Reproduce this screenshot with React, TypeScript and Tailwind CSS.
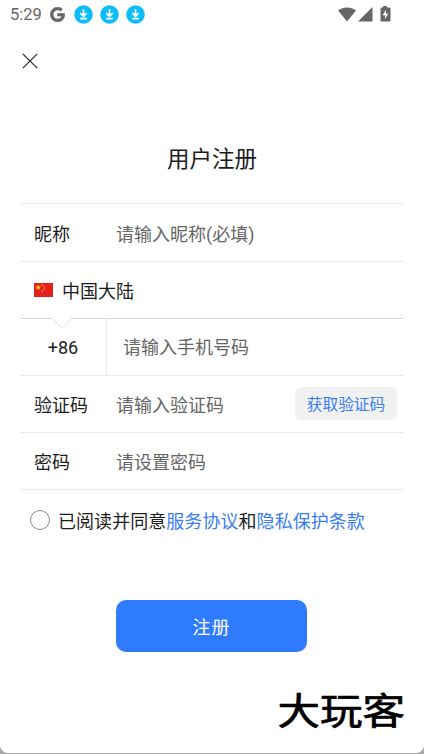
import { useState } from "react"
import type { ReactNode } from "react"
import { FaGoogle } from "react-icons/fa"

function DownloadBadge() {
  return (
    <svg width="19" height="19" viewBox="0 0 19 19" fill="none" aria-hidden>
      <circle cx="9.5" cy="9.5" r="9.3" fill="#0cbcfb" />
      <path d="M9.5 4v7.2M6.3 8.2l3.2 3.2 3.2-3.2M6.2 13.6h6.6" stroke="#fff" strokeWidth="1.7" />
    </svg>
  )
}

function StatusBar() {
  return (
    <div className="flex h-7 shrink-0 items-center pt-px pl-[10px] text-[#666]">
      <span className="w-[33px] pt-[2px] text-[16.5px] leading-none whitespace-nowrap">5:29</span>
      <FaGoogle className="ml-[7px] size-[15px]" stroke="currentColor" strokeWidth="22" />
      <div className="ml-[9px] flex gap-[7px]">
        <DownloadBadge />
        <DownloadBadge />
        <DownloadBadge />
      </div>
      <svg className="mr-[32px] mb-px ml-auto" width="54" height="17" viewBox="0 0 54 17" fill="#666" aria-hidden>
        <path d="M0 4.6C5.5.4 12.5.4 18 4.6L9 15.5Z" />
        <path d="M34.5 1V15.5H20Z" />
        <path d="M45 0h4v1.5h2.5a1 1 0 0 1 1 1V14.5a1 1 0 0 1-1 1h-8a1 1 0 0 1-1-1v-12a1 1 0 0 1 1-1H45Z" />
        <path d="M48 4l-3.5 5.2h2.4V13l3.5-5.2H48Z" fill="#fff" />
      </svg>
    </div>
  )
}

function ChinaFlag() {
  return (
    <svg className="mr-[9px] mb-[2px]" width="19" height="14" viewBox="0 0 19 14" aria-hidden>
      <rect width="19" height="14" fill="#e3201b" />
      <path d="M4.2 1.5l.8 2.1h2.2L5.5 4.9l.6 2.2-1.9-1.3-1.9 1.3.6-2.2-1.7-1.3h2.2Z" fill="#fbc91d" />
      <g fill="#f5a623">
        <circle cx="8.2" cy="1.9" r=".8" />
        <circle cx="10.2" cy="3.7" r=".8" />
        <circle cx="10.2" cy="6.2" r=".8" />
        <circle cx="8.2" cy="8.2" r=".8" />
      </g>
    </svg>
  )
}

type FieldProps = {
  label: string
  placeholder: string
  type?: string
  children?: ReactNode
}

function Field({ label, placeholder, type = "text", children }: FieldProps) {
  return (
    <div className="flex h-[57px] items-center border-b border-[#ebebeb] pt-[2px] pl-[14px] pr-[7px]">
      <label className="w-[82px] shrink-0">{label}</label>
      <input
        type={type}
        placeholder={placeholder}
        className="h-10 w-0 min-w-0 flex-1 bg-transparent outline-none placeholder:text-[#666]"
      />
      {children}
    </div>
  )
}

export default function App() {
  const [agreed, setAgreed] = useState(false)

  return (
    <div className="h-[754px] w-[424px] overflow-hidden bg-[#aaa] font-[Roboto,'Noto_Sans_CJK_SC',sans-serif] text-[18px] text-[#1c1c1c]">
      <div className="flex h-[753px] flex-col rounded-b-[8px] bg-white">
        <StatusBar />

        <button type="button" aria-label="Close" className="mt-[25px] ml-[22px] size-4">
          <svg width="16" height="16" viewBox="0 0 16 16" stroke="#222" strokeWidth="1.2">
            <path d="M.8.8l14.4 14.4M15.2.8.8 15.2" />
          </svg>
        </button>

        <h1 className="mt-[73px] text-center text-[22.5px] leading-[34px]">用户注册</h1>

        <div className="mt-[27px] mr-5 ml-5 border-t border-[#ebebeb]">
          <div className="h-px" />
          <Field label="昵称" placeholder="请输入昵称(必填)" />

          <div className="flex h-[57px] items-center border-b border-[#d9d9d9] pt-[2px] pl-[14px]">
            <ChinaFlag />
            <span>中国大陆</span>
          </div>

          <div className="relative flex h-[57px] items-center border-b border-[#ebebeb]">
            <svg className="absolute top-[-1px] left-[32px]" width="20" height="11" viewBox="0 0 20 11" aria-hidden>
              <path d="M0 0h20L10 10Z" fill="#fff" />
              <path d="M.5.5 10 10 19.5.5" fill="none" stroke="#e0e0e0" />
            </svg>
            <div className="flex h-full w-[87px] items-center justify-center border-r border-[#e6e6e6]">+86</div>
            <input
              type="tel"
              placeholder="请输入手机号码"
              className="ml-4 h-10 w-0 flex-1 bg-transparent outline-none placeholder:text-[#666]"
            />
          </div>

          <Field label="验证码" placeholder="请输入验证码">
            <button type="button" className="mb-[4px] h-[33px] w-[102px] shrink-0 rounded-[6px] bg-[#f1f1f1] pt-[3px] text-[15.7px] text-[#3a7df0]">
              获取验证码
            </button>
          </Field>
          <Field label="密码" placeholder="请设置密码" type="password" />
        </div>

        <div className="mt-[17px] ml-[30px] flex items-center">
          <button
            type="button"
            role="checkbox"
            aria-checked={agreed}
            aria-label="同意"
            onClick={() => setAgreed(!agreed)}
            className={`mr-[8px] mb-[2px] size-5 rounded-full border ${agreed ? "border-[#2f7bff] bg-[#2f7bff]" : "border-[#888]"}`}
          />
          <p className="pt-px leading-[27px] tracking-[0.05px]">
            已阅读并同意<a className="text-[#3a7df0]">服务协议</a>和<a className="text-[#3a7df0]">隐私保护条款</a>
          </p>
        </div>

        <button type="button" className="mt-[65px] ml-[116px] h-[52px] w-[191px] shrink-0 rounded-[10px] bg-[#2f7bff] pt-[2px] text-[18px] tracking-[1px] text-white">
          注册
        </button>

        <div className="mt-[40px] mr-[19px] origin-center scale-y-[0.88] self-end text-[42.5px] leading-[42px] font-normal text-black [-webkit-text-stroke:0.8px_black]">
          大玩客
        </div>
      </div>
    </div>
  )
}
